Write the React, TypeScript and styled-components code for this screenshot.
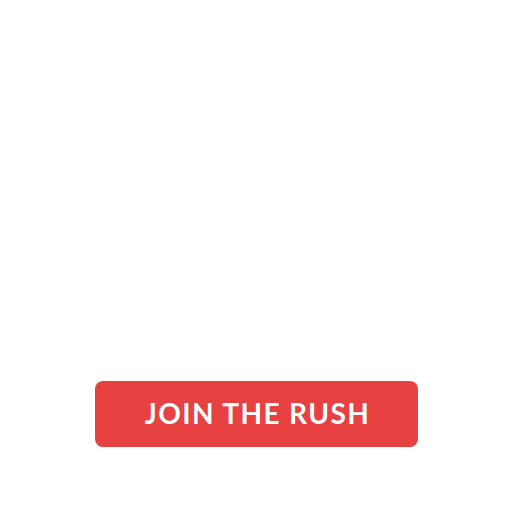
import React from "react";
import styled, { createGlobalStyle } from "styled-components";

const Global = createGlobalStyle`
  html, body { margin: 0; padding: 0; background: #ffffff; }
  body { font-family: Lato, "Noto Sans", sans-serif; }
`;

const Page = styled.main`
  width: 512px;
  height: 512px;
  display: flex;
  flex-direction: column;
  align-items: center;
  justify-content: flex-end;
  padding-bottom: 65px;
  box-sizing: border-box;
`;

const CtaButton = styled.button`
  width: 323px;
  height: 66px;
  border: none;
  border-radius: 8px;
  background: #e84142;
  color: #ffffff;
  font-family: Lato, "Noto Sans", sans-serif;
  font-weight: 700;
  font-size: 28px;
  letter-spacing: 1.4px;
  display: flex;
  align-items: center;
  justify-content: center;
  padding: 0 0 2px 3px;
  cursor: pointer;
`;

export default function App() {
  return (
    <>
      <Global />
      <Page>
        <CtaButton>JOIN THE RUSH</CtaButton>
      </Page>
    </>
  );
}
